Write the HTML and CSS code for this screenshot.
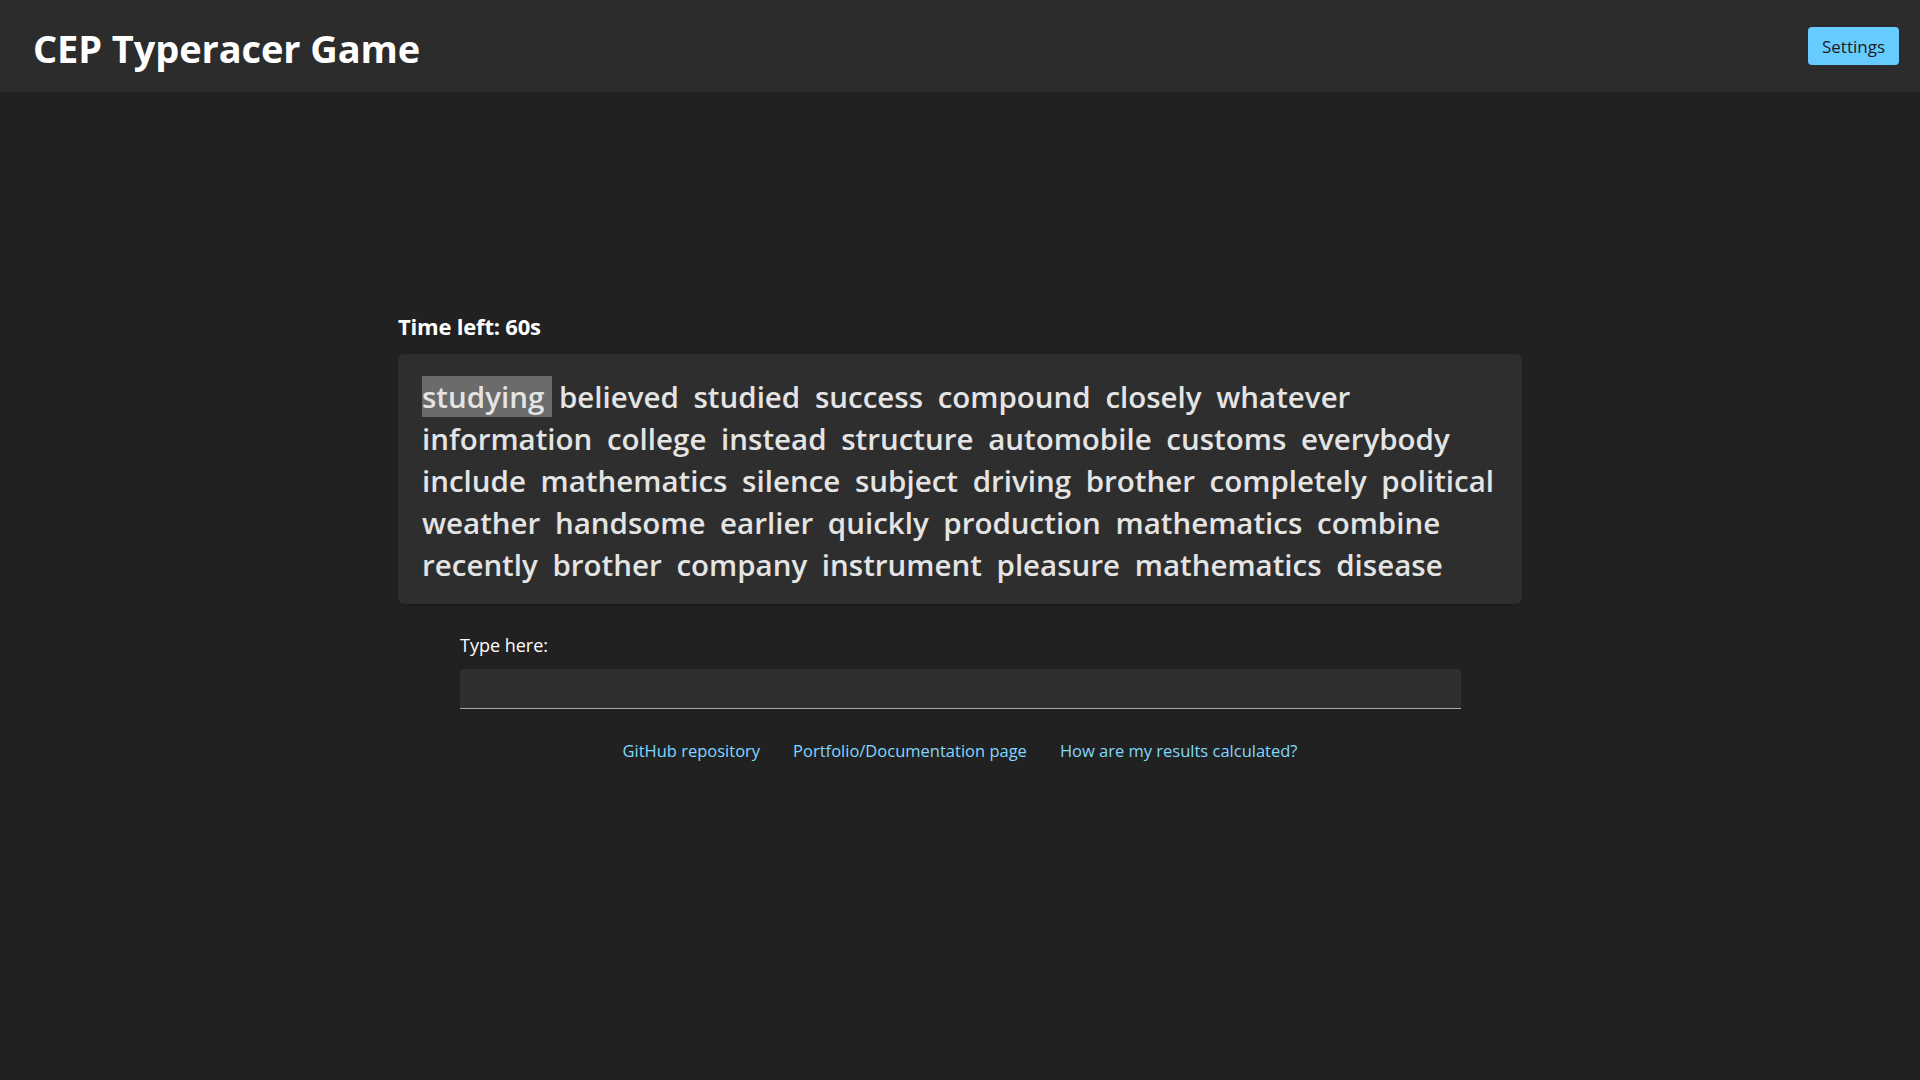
FILE: index.html
```html
<!DOCTYPE html>
<html lang="en">
<head>
<meta charset="utf-8">
<title>CEP Typeracer Game</title>
<link rel="stylesheet" href="styles.css">
</head>
<body>
<header class="topbar">
  <h1 class="title">CEP Typeracer Game</h1>
  <button class="settings-btn">Settings</button>
</header>
<main class="main">
  <section class="game">
    <div class="timer">Time left: 60s</div>
    <div class="words">
      <span class="word current">studying </span><span class="word">believed </span><span class="word">studied </span><span class="word">success </span><span class="word">compound </span><span class="word">closely </span><span class="word">whatever </span><span class="word">information </span><span class="word">college </span><span class="word">instead </span><span class="word">structure </span><span class="word">automobile </span><span class="word">customs </span><span class="word">everybody </span><span class="word">include </span><span class="word">mathematics </span><span class="word">silence </span><span class="word">subject </span><span class="word">driving </span><span class="word">brother </span><span class="word">completely </span><span class="word">political </span><span class="word">weather </span><span class="word">handsome </span><span class="word">earlier </span><span class="word">quickly </span><span class="word">production </span><span class="word">mathematics </span><span class="word">combine </span><span class="word">recently </span><span class="word">brother </span><span class="word">company </span><span class="word">instrument </span><span class="word">pleasure </span><span class="word">mathematics </span><span class="word">disease </span>
    </div>
    <div class="type-area">
      <label class="type-label" for="typein">Type here:</label>
      <input class="type-input" id="typein" type="text" autocomplete="off">
    </div>
    <nav class="links">
      <a href="#">GitHub repository</a>
      <a href="#">Portfolio/Documentation page</a>
      <a href="#">How are my results calculated?</a>
    </nav>
  </section>
</main>
</body>
</html>
```

FILE: styles.css
```css
* { box-sizing: border-box; }
html, body {
  margin: 0;
  padding: 0;
  height: 100%;
}
body {
  background: #212121;
  color: #ffffff;
  font-family: "Open Sans", "Noto Sans", sans-serif;
}
.topbar {
  height: 92px;
  background: #2c2c2c;
  display: flex;
  align-items: center;
  justify-content: space-between;
  padding: 0 21px 0 33px;
}
.title {
  margin: 0;
  font-size: 38px;
  font-weight: 700;
  letter-spacing: -0.1px;
  color: #ffffff;
  position: relative;
  top: 2px;
}
.settings-btn {
  background: #66ccff;
  color: #1b1b1b;
  border: none;
  border-radius: 4px;
  height: 38px;
  padding: 0 14px;
  font-family: "Open Sans", "Noto Sans", sans-serif;
  font-size: 17px;
  margin-top: 0;
}
.main {
  display: flex;
  justify-content: center;
  padding-top: 219px;
}
.game {
  width: 1124px;
  display: flex;
  flex-direction: column;
}
.timer {
  font-size: 22px;
  font-weight: 700;
  letter-spacing: -0.2px;
  line-height: 30px;
  margin-bottom: 13px;
}
.words {
  background: #2e2e2e;
  border-radius: 6px;
  padding: 22px 22px 18px 24px;
  font-size: 29.5px;
  font-weight: 600;
  line-height: 42px;
  color: #e4e4e4;
  box-shadow: 0 1px 3px rgba(0,0,0,0.3);
}
.word {
  margin-right: 7px;
}
.word.current {
  background: #6b6b6b;
}
.type-area {
  margin: 29px 61px 0 62px;
  display: flex;
  flex-direction: column;
}
.type-label {
  font-size: 18px;
  line-height: 24px;
  margin-bottom: 12px;
}
.type-input {
  height: 40px;
  background: #2f2f2f;
  border: none;
  border-bottom: 1px solid #a8a8a8;
  border-radius: 4px 4px 0 0;
  color: #fff;
  font-size: 17px;
  padding: 0 12px;
  outline: none;
}
.links {
  display: flex;
  justify-content: center;
  gap: 33px;
  margin-top: 30px;
  font-size: 16.5px;
}
.links a {
  color: #80d8ff;
  text-decoration: none;
}
```
